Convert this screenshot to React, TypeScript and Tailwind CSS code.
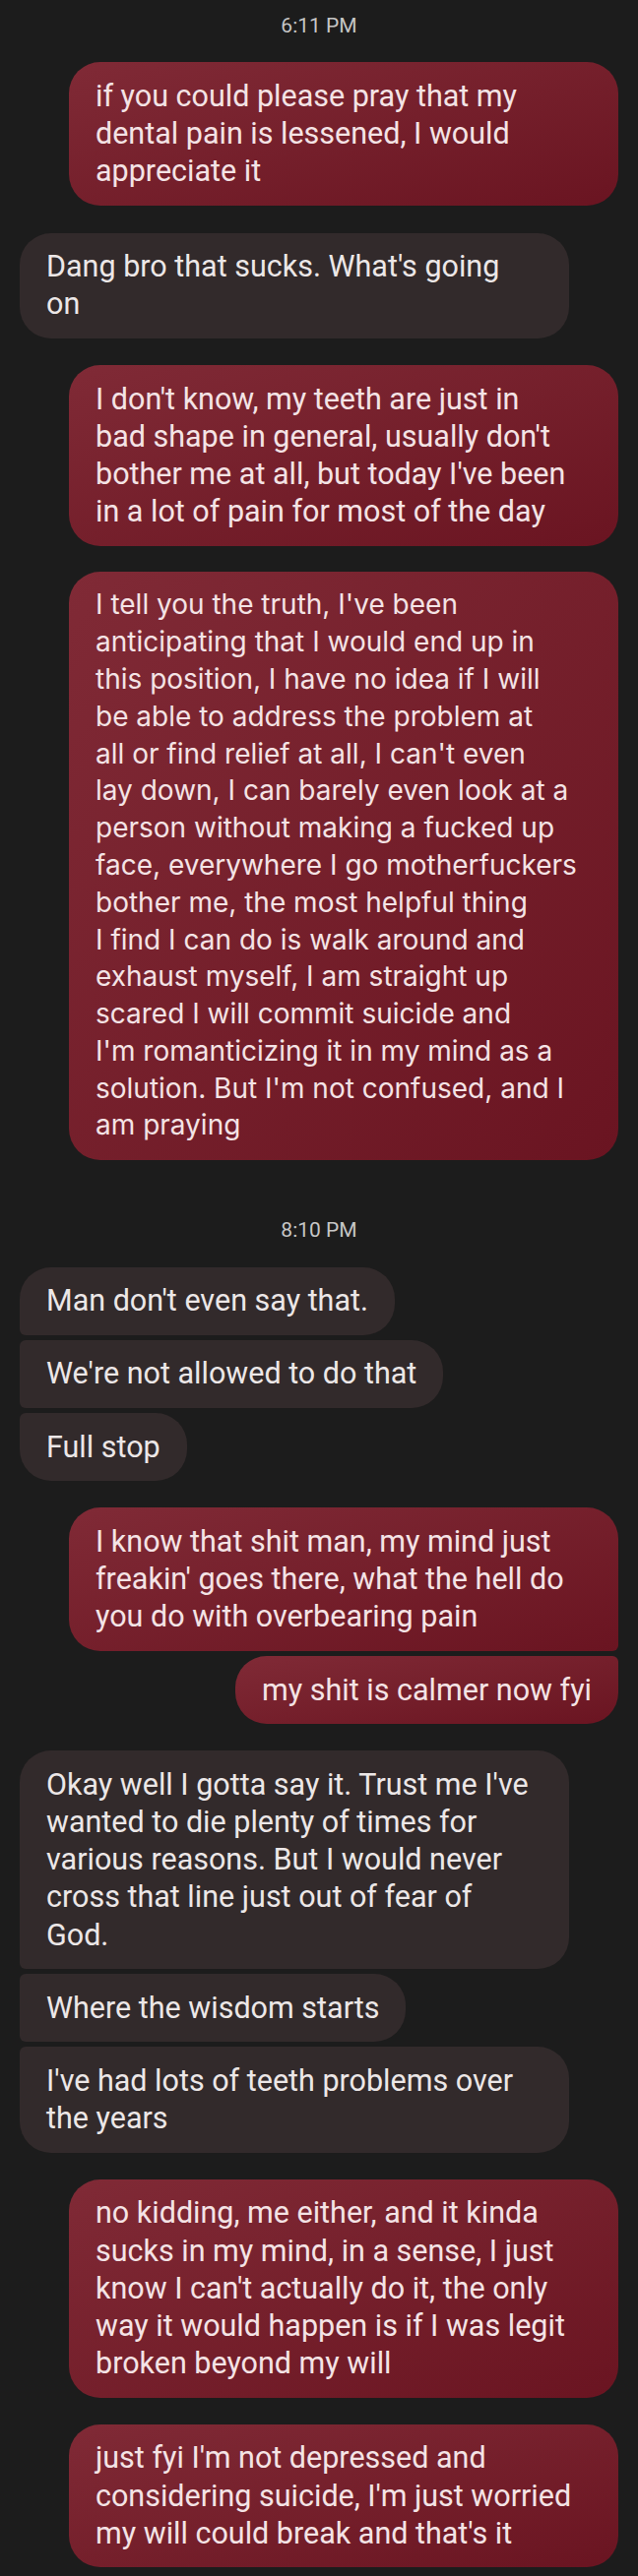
import React from "react";

type Msg = {
  from: "me" | "them";
  lines: string[];
  // corner shape inside a run of bubbles from the same side
  pos?: "first" | "mid" | "last";
  gap: string;
  alt?: boolean;
};

const messages: (Msg | { time: string; gap: string })[] = [
  { time: "6:11 PM", gap: "mt-0" },
  {
    from: "me",
    gap: "mt-[24px]",
    lines: [
      "if you could please pray that my",
      "dental pain is lessened, I would",
      "appreciate it",
    ],
  },
  {
    from: "them",
    gap: "mt-[28px]",
    lines: ["Dang bro that sucks. What's going", "on"],
  },
  {
    from: "me",
    gap: "mt-[27px]",
    lines: [
      "I don't know, my teeth are just in",
      "bad shape in general, usually don't",
      "bother me at all, but today I've been",
      "in a lot of pain for most of the day",
    ],
  },
  {
    from: "me",
    gap: "mt-[26px]",
    alt: true,
    lines: [
      "I tell you the truth, I've been",
      "anticipating that I would end up in",
      "this position, I have no idea if I will",
      "be able to address the problem at",
      "all or find relief at all, I can't even",
      "lay down, I can barely even look at a",
      "person without making a fucked up",
      "face, everywhere I go motherfuckers",
      "bother me, the most helpful thing",
      "I find I can do is walk around and",
      "exhaust myself, I am straight up",
      "scared I will commit suicide and",
      "I'm romanticizing it in my mind as a",
      "solution. But I'm not confused, and I",
      "am praying",
    ],
  },
  { time: "8:10 PM", gap: "mt-[59px]" },
  { from: "them", gap: "mt-[25px]", pos: "first", lines: ["Man don't even say that."] },
  { from: "them", gap: "mt-[5px]", pos: "mid", lines: ["We're not allowed to do that"] },
  { from: "them", gap: "mt-[5px]", pos: "last", lines: ["Full stop"] },
  {
    from: "me",
    gap: "mt-[27px]",
    pos: "first",
    lines: [
      "I know that shit man, my mind just",
      "freakin' goes there, what the hell do",
      "you do with overbearing pain",
    ],
  },
  { from: "me", gap: "mt-[5px]", pos: "last", lines: ["my shit is calmer now fyi"] },
  {
    from: "them",
    gap: "mt-[27px]",
    pos: "first",
    lines: [
      "Okay well I gotta say it. Trust me I've",
      "wanted to die plenty of times for",
      "various reasons. But I would never",
      "cross that line just out of fear of",
      "God.",
    ],
  },
  { from: "them", gap: "mt-[5px]", pos: "mid", lines: ["Where the wisdom starts"] },
  {
    from: "them",
    gap: "mt-[5px]",
    pos: "last",
    lines: ["I've had lots of teeth problems over", "the years"],
  },
  {
    from: "me",
    gap: "mt-[27px]",
    lines: [
      "no kidding, me either, and it kinda",
      "sucks in my mind, in a sense, I just",
      "know I can't actually do it, the only",
      "way it would happen is if I was legit",
      "broken beyond my will",
    ],
  },
  {
    from: "me",
    gap: "mt-[27px]",
    lines: [
      "just fyi I'm not depressed and",
      "considering suicide, I'm just worried",
      "my will could break and that's it",
    ],
  },
];

function corners(m: Msg) {
  if (m.from === "them") {
    if (m.pos === "first") return "rounded-[32px] rounded-bl-[6px]";
    if (m.pos === "mid") return "rounded-[32px] rounded-l-[6px]";
    if (m.pos === "last") return "rounded-[32px] rounded-tl-[6px]";
    return "rounded-[32px]";
  }
  if (m.pos === "first") return "rounded-[32px] rounded-br-[6px]";
  if (m.pos === "mid") return "rounded-[32px] rounded-r-[6px]";
  if (m.pos === "last") return "rounded-[32px] rounded-tr-[6px]";
  return "rounded-[32px]";
}

function Bubble({ m }: { m: Msg }) {
  const mine = m.from === "me";
  const width = m.lines.length > 1 ? "w-[558px]" : "w-fit";
  const tone = mine
    ? "self-end bg-linear-to-br from-[#802a36] to-[#6a1421] text-[#f4e3e5]"
    : "self-start bg-[#322a2b] text-[#ece7e7]";
  const type = m.alt
    ? "font-['Inter',sans-serif] text-[28px] leading-[37.8px]"
    : "text-[30.5px] leading-[38.2px]";
  return (
    <div className={`${m.gap} ${width} ${tone} ${corners(m)} px-[27px] py-[15.5px]`}>
      <p className={`${type} whitespace-nowrap`}>
        {m.lines.map((l, i) => (
          <React.Fragment key={i}>
            {l}
            {i < m.lines.length - 1 && <br />}
          </React.Fragment>
        ))}
      </p>
    </div>
  );
}

export default function App() {
  return (
    <div className="min-h-screen bg-[#1c1c1c] px-[20px] pt-[14px] pb-[10px] font-['Roboto',sans-serif]">
      <div className="flex flex-col">
        {messages.map((m, i) =>
          "time" in m ? (
            <div
              key={i}
              className={`${m.gap} text-center text-[21px] leading-[25px] text-[#c6c6c6]`}
            >
              {m.time}
            </div>
          ) : (
            <Bubble key={i} m={m} />
          ),
        )}
      </div>
    </div>
  );
}
